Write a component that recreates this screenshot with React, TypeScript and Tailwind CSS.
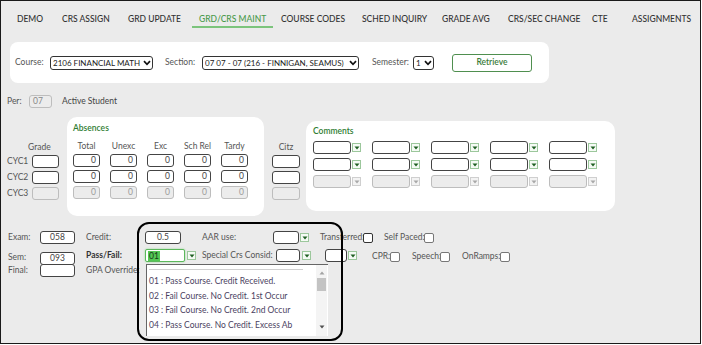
import React from 'react';

const navItems = [
  { label: 'DEMO', w: 'w-[45px]' },
  { label: 'CRS ASSIGN', w: 'w-[66px]' },
  { label: 'GRD UPDATE', w: 'w-[71px]' },
  { label: 'GRD/CRS MAINT', w: 'w-[82px]', active: true },
  { label: 'COURSE CODES', w: 'w-[81px]' },
  { label: 'SCHED INQUIRY', w: 'w-[80px]' },
  { label: 'GRADE AVG', w: 'w-[66px]' },
  { label: 'CRS/SEC CHANGE', w: 'w-[84px]' },
  { label: 'CTE', w: 'w-[40px]' },
  { label: 'ASSIGNMENTS', w: 'w-[70px]' },
];

const absenceCols = ['Total', 'Unexc', 'Exc', 'Sch Rel', 'Tardy'];
const cycles = ['CYC1', 'CYC2', 'CYC3'];

const Chevron: React.FC = () => (
  <svg width="8" height="6" viewBox="0 0 8 6" className="shrink-0">
    <path d="M1 1.2 L4 4.3 L7 1.2" fill="none" stroke="#111" strokeWidth="1.7" />
  </svg>
);

const Select: React.FC<{ value: string; w: string }> = ({ value, w }) => (
  <div className={`${w} h-[14px] shrink-0 flex items-center justify-between border border-[#333] rounded-[3px] bg-white pl-[2px] pr-[1px] text-[8px] text-[#222] whitespace-nowrap overflow-hidden`}>
    <span className="overflow-hidden">{value}</span>
    <Chevron />
  </div>
);

const DropArrow: React.FC<{ disabled?: boolean; ml?: string }> = ({ disabled, ml = 'ml-[1px]' }) => (
  <div
    className={`${ml} w-[9px] h-[9px] shrink-0 flex items-center justify-center border ${
      disabled ? 'border-[#cfcfcf] bg-[#f3f3f3]' : 'border-[#9cc79c] bg-[#f5fbf5]'
    }`}
  >
    <svg width="6" height="4" viewBox="0 0 6 4">
      <polygon points="0.5,0.5 5.5,0.5 3,3.5" fill={disabled ? '#a8a8a8' : '#1f5f22'} />
    </svg>
  </div>
);

const Box: React.FC<{ w: string; value?: string; disabled?: boolean; align?: string; extra?: string }> = ({
  w,
  value = '',
  disabled,
  align = 'justify-end pr-[3px]',
  extra = '',
}) => (
  <div
    className={`${w} h-[13px] shrink-0 flex items-center ${align} rounded-[3px] border text-[8.5px] ${
      disabled ? 'border-[#bdbdbd] bg-[#ececec] text-[#9a9a9a]' : 'border-[#444] bg-white text-[#444]'
    } ${extra}`}
  >
    {value}
  </div>
);

const Check: React.FC<{ dark?: boolean }> = ({ dark }) => (
  <div className={`w-[10px] h-[10px] shrink-0 rounded-[2px] border bg-white ${dark ? 'border-[#333]' : 'border-[#777]'}`} />
);

const App: React.FC = () => {
  return (
    <div className="w-[702px] h-[345px] bg-white">
      <div className="relative w-[701px] h-[344px] border border-[#1a1a1a] bg-[#ebebeb] overflow-hidden font-['Lato','Open_Sans',sans-serif] text-[8.5px] text-[#555] whitespace-nowrap">
        {/* tabs */}
        <div className="flex h-[27px] pl-[16px] pt-[12px]">
          {navItems.map((n) => (
            <div key={n.label} className={`${n.w} shrink-0 leading-[12px] text-[8.5px] font-medium`}>
              {n.active ? (
                <span className="inline-block -ml-[7px] px-[7px] pb-[1px] border-b-2 border-[#7cc47c] text-[#4a9a4a]">
                  {n.label}
                </span>
              ) : (
                <span className="text-[#333]">{n.label}</span>
              )}
            </div>
          ))}
        </div>

        {/* course selection */}
        <div className="ml-[9px] mt-[14px] w-[539px] h-[41px] rounded-[8px] bg-white flex items-center pl-[5px]">
          <span className="w-[35px] shrink-0">Course:</span>
          <Select value="2106 FINANCIAL MATH" w="w-[103px]" />
          <span className="ml-[12px] w-[37px] shrink-0">Section:</span>
          <Select value="07 07 - 07 (216 - FINNIGAN, SEAMUS)" w="w-[157px]" />
          <span className="ml-[13px] w-[41px] shrink-0">Semester:</span>
          <Select value="1" w="w-[21px]" />
          <button className="ml-[18px] w-[80px] h-[18px] rounded-[3px] border border-[#4f8f4f] bg-white text-[8.5px] font-semibold text-[#3b7d3b]">
            Retrieve
          </button>
        </div>

        {/* per */}
        <div className="mt-[12px] flex items-center pl-[6px]">
          <span className="w-[22px]">Per:</span>
          <Box w="w-[23px]" value="07" disabled align="justify-start pl-[3px]" extra="text-[#888] border-[#999]" />
          <span className="ml-[10px] text-[#444]">Active Student</span>
        </div>

        {/* absences + comments */}
        <div className="mt-[9px] flex items-start">
          <div className="w-[66px] shrink-0 pl-[6px] pt-[24px]">
            <div className="h-[12px] leading-[12px] pl-[21px]">Grade</div>
            <div className="mt-[2px] flex flex-col gap-[3px]">
              {cycles.map((c, i) => (
                <div key={c} className="flex items-center h-[13px]">
                  <span className="w-[25px]">{c}</span>
                  <Box w="w-[27px]" disabled={i === 2} />
                </div>
              ))}
            </div>
          </div>

          <div className="w-[197px] h-[99px] shrink-0 rounded-[10px] bg-white pl-[6px] pt-[5px]">
            <div className="h-[12px] leading-[12px] font-semibold text-[#2f7d32]">Absences</div>
            <div className="mt-[6px] flex gap-[10px] h-[12px] leading-[12px]">
              {absenceCols.map((c) => (
                <div key={c} className="w-[27px] text-center">
                  {c}
                </div>
              ))}
            </div>
            <div className="mt-[2px] flex flex-col gap-[3px]">
              {cycles.map((c, i) => (
                <div key={c} className="flex gap-[10px]">
                  {absenceCols.map((a) => (
                    <Box key={a} w="w-[27px]" value="0" disabled={i === 2} />
                  ))}
                </div>
              ))}
            </div>
          </div>

          <div className="ml-[8px] w-[28px] shrink-0 pt-[24px]">
            <div className="h-[12px] leading-[12px] text-center">Citz</div>
            <div className="mt-[2px] flex flex-col gap-[3px]">
              {cycles.map((c, i) => (
                <Box key={c} w="w-[28px]" disabled={i === 2} />
              ))}
            </div>
          </div>

          <div className="ml-[6px] mt-[4px] w-[309px] h-[90px] shrink-0 rounded-[10px] bg-white pl-[7px] pt-[4px]">
            <div className="h-[12px] leading-[12px] font-semibold text-[#2f7d32]">Comments</div>
            <div className="mt-[4px] flex flex-col gap-[4px]">
              {cycles.map((c, i) => (
                <div key={c} className="flex gap-[11px]">
                  {[0, 1, 2, 3, 4].map((k) => (
                    <div key={k} className="flex items-center w-[48px]">
                      <Box w="w-[38px]" disabled={i === 2} />
                      <DropArrow disabled={i === 2} />
                    </div>
                  ))}
                </div>
              ))}
            </div>
          </div>
        </div>

        {/* credit area */}
        <div className="mt-[15px] pl-[7px] flex flex-col">
          <div className="flex items-center h-[13px]">
            <span className="w-[32px]">Exam:</span>
            <Box w="w-[35px]" value="058" align="justify-center" />
            <span className="ml-[11px] w-[59px]">Credit:</span>
            <Box w="w-[36px]" value="0.5" align="justify-center" />
            <span className="ml-[21px] w-[71px]">AAR use:</span>
            <Box w="w-[26px]" />
            <DropArrow />
            <span className="ml-[11px] w-[43px]">Transferred:</span>
            <Check dark />
            <span className="ml-[11px] w-[40px]">Self Paced:</span>
            <Check />
          </div>

          <div className="mt-[5px] flex items-start h-[13px]">
            <span className="w-[32px] leading-[13px] mt-[2px]">Sem:</span>
            <Box w="w-[35px]" value="093" align="justify-center" extra="mt-[3px]" />
            <span className="ml-[11px] w-[59px] leading-[13px] font-bold text-[#333]">Pass/Fail:</span>
            <div className="w-[40px] h-[13px] shrink-0 flex items-center pl-[2px] rounded-[2px] border border-[#5cb85c] bg-white shadow-[0_0_2px_#8fd68f]">
              <span className="bg-[#54c754] text-[#1a3a1a] leading-[10px] px-[1px]">01</span>
            </div>
            <div className="flex items-center h-[13px]">
              <DropArrow ml="ml-[2px]" />
            </div>
            <span className="ml-[6px] w-[74px] leading-[13px]">Special Crs Consid:</span>
            <Box w="w-[24px]" />
            <div className="flex items-center h-[13px]">
              <DropArrow ml="ml-[2px]" />
            </div>
            <Box w="w-[22px]" extra="ml-[14px]" />
            <div className="flex items-center h-[13px]">
              <DropArrow />
            </div>
            <div className="ml-[15px] mt-[2px] flex items-center h-[11px]">
              <span className="w-[18px]">CPR:</span>
              <Check />
              <span className="ml-[12px] w-[28px]">Speech:</span>
              <Check />
              <span className="ml-[12px] w-[38px]">OnRamps:</span>
              <Check />
            </div>
          </div>

          <div className="mt-[2px] flex items-center h-[13px]">
            <span className="w-[32px]">Final:</span>
            <Box w="w-[35px]" />
            <span className="ml-[11px]">GPA Override:</span>
          </div>
        </div>

        {/* pass/fail dropdown list */}
        <div className="absolute left-[145px] top-[263px] w-[182px] h-[72px] bg-white border-l border-t border-[#666] flex">
          <div className="flex-1 pl-[2px] pt-[4px]">
            <div className="h-px w-[154px] bg-[#d0d0d0]" />
            <div className="mt-[4px] flex flex-col text-[8.5px] leading-[14.7px] text-[#4b3f5f]">
              <span>01 : Pass Course. Credit Received.</span>
              <span>02 : Fail Course. No Credit. 1st Occur</span>
              <span>03 : Fail Course. No Credit. 2nd Occur</span>
              <span>04 : Pass Course. No Credit. Excess Ab</span>
            </div>
          </div>
          <div className="w-[11px] mr-[1px] h-full bg-[#f4f4f4] flex flex-col items-center pt-[6px]">
            <svg width="6" height="4" viewBox="0 0 6 4">
              <polygon points="0.5,3.5 5.5,3.5 3,0.5" fill="#a3a3a3" />
            </svg>
            <div className="mt-[3px] w-[9px] h-[13px] bg-[#c3c3c3]" />
            <div className="flex-1" />
            <svg width="6" height="4" viewBox="0 0 6 4" className="mb-[7px]">
              <polygon points="0.5,0.5 5.5,0.5 3,3.5" fill="#505050" />
            </svg>
          </div>
        </div>

        {/* highlight frame */}
        <div className="absolute left-[136px] top-[221px] w-[206px] h-[119px] rounded-[12px] border-[2.5px] border-black" />
      </div>
    </div>
  );
};

export default App;
